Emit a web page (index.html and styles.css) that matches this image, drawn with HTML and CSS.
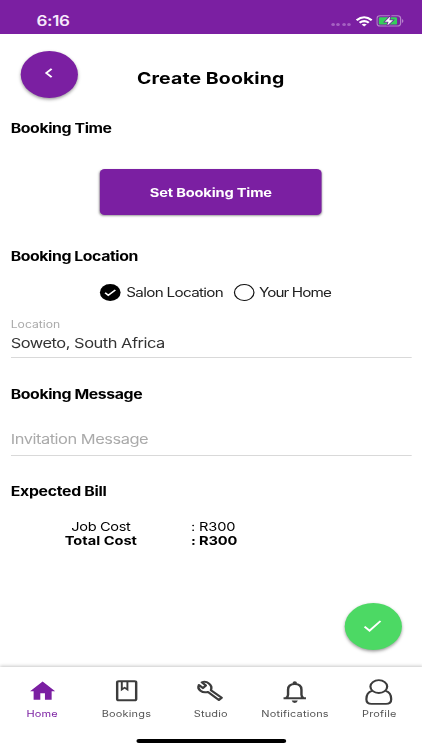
FILE: index.html
```html
<!DOCTYPE html>
<html lang="en">
<head>
<meta charset="utf-8">
<title>Create Booking</title>
<link rel="stylesheet" href="styles.css">
</head>
<body>
<div class="phone">
  <header class="status">
    <span class="time">6:16</span>
    <div class="indicators">
      <span class="dots"><i></i><i></i><i></i><i></i></span>
      <svg class="wifi" viewBox="0 0 14 11"><g fill="none" stroke="#fff" stroke-width="2"><path d="M.8 4.2Q7-1.6 13.2 4.2"/><path d="M3.2 6.8Q7 3.4 10.8 6.8"/></g><path d="M7 10.4 4.9 8.5Q7 6.9 9.1 8.5z" fill="#fff"/></svg>
      <svg class="battery" viewBox="0 0 23 12"><rect x=".5" y=".7" width="19.4" height="10.4" rx="2.6" fill="none" stroke="#b582cb"/><rect x="2" y="2.2" width="15" height="7.4" rx="1.2" fill="#35cf5b"/><path d="M21 4v4q1.200-.6 1.200-2T21 4z" fill="#b582cb"/><path d="M11.400 1.500 7 6.700h3L9 10.600l4.700-5.400h-3z" fill="#fff" stroke="#7b1fa2" stroke-width="1.400" paint-order="stroke"/></svg>
    </div>
  </header>

  <div class="titlebar">
    <button class="round back" aria-label="Back"><svg viewBox="0 0 10 12"><path d="M7.400 1.800 3 6l4.400 4.200" fill="none" stroke="#fff" stroke-width="1.700"/></svg></button>
    <h1>Create Booking</h1>
  </div>

  <main>
    <h2 class="h-time">Booking Time</h2>
    <button class="set-time">Set Booking Time</button>

    <h2 class="h-location">Booking Location</h2>
    <div class="options">
      <span class="radio checked"><svg viewBox="0 0 17 17"><path d="m4.300 8.800 2.600 2.500 5.800-5.300" fill="none" stroke="#fff" stroke-width="1.500"/></svg></span>
      <span class="opt-salon">Salon Location</span>
      <span class="radio"></span>
      <span class="opt-home">Your Home</span>
    </div>
    <div class="field location">
      <label>Location</label>
      <div class="value">Soweto, South Africa</div>
    </div>

    <h2 class="h-message">Booking Message</h2>
    <div class="field message"><div class="placeholder">Invitation Message</div></div>

    <h2 class="h-bill">Expected Bill</h2>
    <div class="bill">
      <span class="name job">Job Cost</span><span class="amount">: R300</span>
      <b class="name">Total Cost</b><b class="amount">: R300</b>
    </div>
  </main>

  <button class="round confirm" aria-label="Confirm"><svg viewBox="0 0 16 14"><path d="m1.300 7.700 4.100 4 9-9.700" fill="none" stroke="#fff" stroke-width="1.700"/></svg></button>

  <nav class="tabs">
    <div class="tab active">
      <svg viewBox="0 0 26 28"><path d="M13 3.600 2.700 13.200h2.900v8.500h5.500v-6.500h3.800v6.500h5.500v-8.500h2.900z" fill="#7b1fa2"/></svg>
      <span>Home</span>
    </div>
    <div class="tab">
      <svg viewBox="0 0 26 28"><g fill="none" stroke="#3c3c3c" stroke-width="2"><rect x="5.200" y="3.200" width="15.600" height="19" rx="1.300"/><path d="M9 3.200v8.300l2.300-1.800 2.300 1.800V3.200" stroke-width="1.600"/></g></svg>
      <span>Bookings</span>
    </div>
    <div class="tab">
      <svg viewBox="0 0 26 28"><path d="M22 19.700 13.200 12.200C14 9.500 13.300 7 11.500 5.400 9.800 3.800 7.600 3.500 5.700 4.300L9 7.500 6.600 10.100 3.300 7C2.500 9 3 11.200 4.600 12.700c1.600 1.500 4 2 6.200 1.200L19.700 22z" fill="none" stroke="#3c3c3c" stroke-width="2" stroke-linejoin="round"/></svg>
      <span>Studio</span>
    </div>
    <div class="tab">
      <svg viewBox="0 0 26 28"><path d="M3.800 20.300h18.400M6 20q1.500-1.400 1.500-3.300v-5C7.500 8 9.700 6 13 6s5.500 2 5.500 5.700v5q0 1.900 1.500 3.300" fill="none" stroke="#3c3c3c" stroke-width="2"/><circle cx="13" cy="5.100" r="1.800" fill="#3c3c3c"/><path d="M10.500 22.600h5q-.4 2.300-2.500 2.300T10.500 22.600z" fill="#3c3c3c"/></svg>
      <span>Notifications</span>
    </div>
    <div class="tab">
      <svg viewBox="0 0 26 28"><g fill="none" stroke="#3c3c3c" stroke-width="1.800"><ellipse cx="13" cy="8.600" rx="6.900" ry="6.400"/><path d="M7.400 12.900C4.200 14 2.800 17 2.800 21.200q0 4.600 4.300 4.600h11.800q4.300 0 4.300-4.600c0-4.200-1.400-7.200-4.600-8.300"/></g></svg>
      <span>Profile</span>
    </div>
  </nav>
  <div class="home-bar"></div>
</div>
</body>
</html>
```
FILE: styles.css
```css
* { box-sizing: border-box; }
html, body { margin: 0; width: 422px; height: 750px; overflow: hidden; background: #fff; }
h1, h2 { margin: 0; }
button { border: 0; padding: 0; font: inherit; color: #fff; }
svg { display: block; }

/* The app is laid out on a narrow canvas and widened to fill the window. */
.phone {
  position: relative;
  display: flex;
  flex-direction: column;
  width: 347px;
  height: 750px;
  transform: scaleX(1.218);
  transform-origin: 0 0;
  font-family: Inter, "Liberation Sans", sans-serif;
  color: #000;
}

.status {
  display: flex;
  justify-content: space-between;
  height: 34px;
  padding: 13px 14.800px 0 30px;
  background: #7b1fa2;
  color: #f6e9fb;
}
.time { font-size: 14px; line-height: 16px; font-weight: 600; letter-spacing: -.3px; }
.indicators { display: flex; height: 16px; align-items: center; }
.dots { display: flex; gap: 1.200px; margin-right: 4px; padding-top: 7px; }
.dots i { width: 3px; height: 3px; border-radius: 50%; background: #a562c2; }
.wifi { width: 14px; height: 11px; margin-right: 3.500px; }
.battery { width: 23px; height: 12px; }

.titlebar { display: flex; height: 84px; padding: 16.500px 0 0 16.800px; }
.round {
  display: flex;
  align-items: center;
  justify-content: center;
  width: 47px;
  height: 47px;
  border-radius: 50%;
  box-shadow: 0 1.500px 3px rgba(0, 0, 0, .4);
}
.back { background: #7b1fa2; }
.back svg { width: 10px; height: 12px; margin: 0 1px 3px 0; }
h1 { margin: 17.500px 0 0 48.700px; font-size: 16px; line-height: 20px; font-weight: 700; letter-spacing: .08px; }

main { padding: 0 9.300px 0 8.800px; }
h2 { height: 20px; font-size: 13px; line-height: 20px; font-weight: 700; letter-spacing: -.33px; }
.h-location { letter-spacing: -.35px; }
.set-time {
  display: block;
  width: 182px;
  height: 46px;
  margin: 31px 0 0 73.300px;
  border-radius: 4px;
  background: #7b1fa2;
  box-shadow: 0 1px 2px rgba(0, 0, 0, .4);
  font-size: 12px;
  font-weight: 700;
  letter-spacing: -.13px;
}
.h-location { margin-top: 31px; }
.options { display: flex; align-items: center; height: 20px; margin: 16px 0 0 73.500px; font-size: 12.500px; letter-spacing: -.55px; color: #222; white-space: nowrap; }
.radio { width: 17px; height: 17px; flex: none; border: 1px solid #111; border-radius: 50%; }
.radio.checked { border: 0; background: #000; }
.opt-salon { width: 88px; margin-left: 4.300px; }
.opt-home { margin-left: 4px; letter-spacing: -.72px; }
.field { border-bottom: 1px solid #d9d9d9; }
.location { height: 44px; margin-top: 12px; padding-top: 4px; }
label { display: block; font-size: 10px; line-height: 13px; color: #aaa; }
.value { margin-top: 2px; font-size: 13.500px; line-height: 20px; letter-spacing: -.4px; color: #333; }
.h-message { margin-top: 26px; }
.message { height: 32px; margin-top: 20px; padding-top: 5px; }
.placeholder { font-size: 13.500px; line-height: 20px; letter-spacing: -.39px; color: #aaa; }
.h-bill { margin-top: 25px; letter-spacing: -.25px; }
.bill {
  display: grid;
  grid-template-columns: 148px auto;
  grid-auto-rows: 14px;
  margin-top: 19px;
  font-size: 12px;
  line-height: 14px;
}
.name { text-align: center; }
.job { letter-spacing: -.3px; }
.amount { letter-spacing: -.1px; }

.confirm { position: absolute; left: 282.600px; top: 603.400px; background: #4cd964; }
.confirm svg { width: 16px; height: 14px; margin-bottom: 2px; }

.tabs {
  display: flex;
  height: 83px;
  margin-top: auto;
  padding: 11px 1px 0 0;
  background: #fff;
  box-shadow: 0 -1px 3px rgba(0, 0, 0, .22);
}
.tab { flex: 1 1 0; min-width: 0; display: flex; flex-direction: column; align-items: center; font-size: 9px; line-height: 12px; letter-spacing: .14px; color: #555; white-space: nowrap; }
.tab svg { width: 26px; height: 28px; margin-bottom: 2px; }
.tab.active { color: #7b1fa2; }
.home-bar { position: absolute; left: 111.500px; top: 739px; width: 123.500px; height: 4px; border-radius: 2px; background: #000; }
```
